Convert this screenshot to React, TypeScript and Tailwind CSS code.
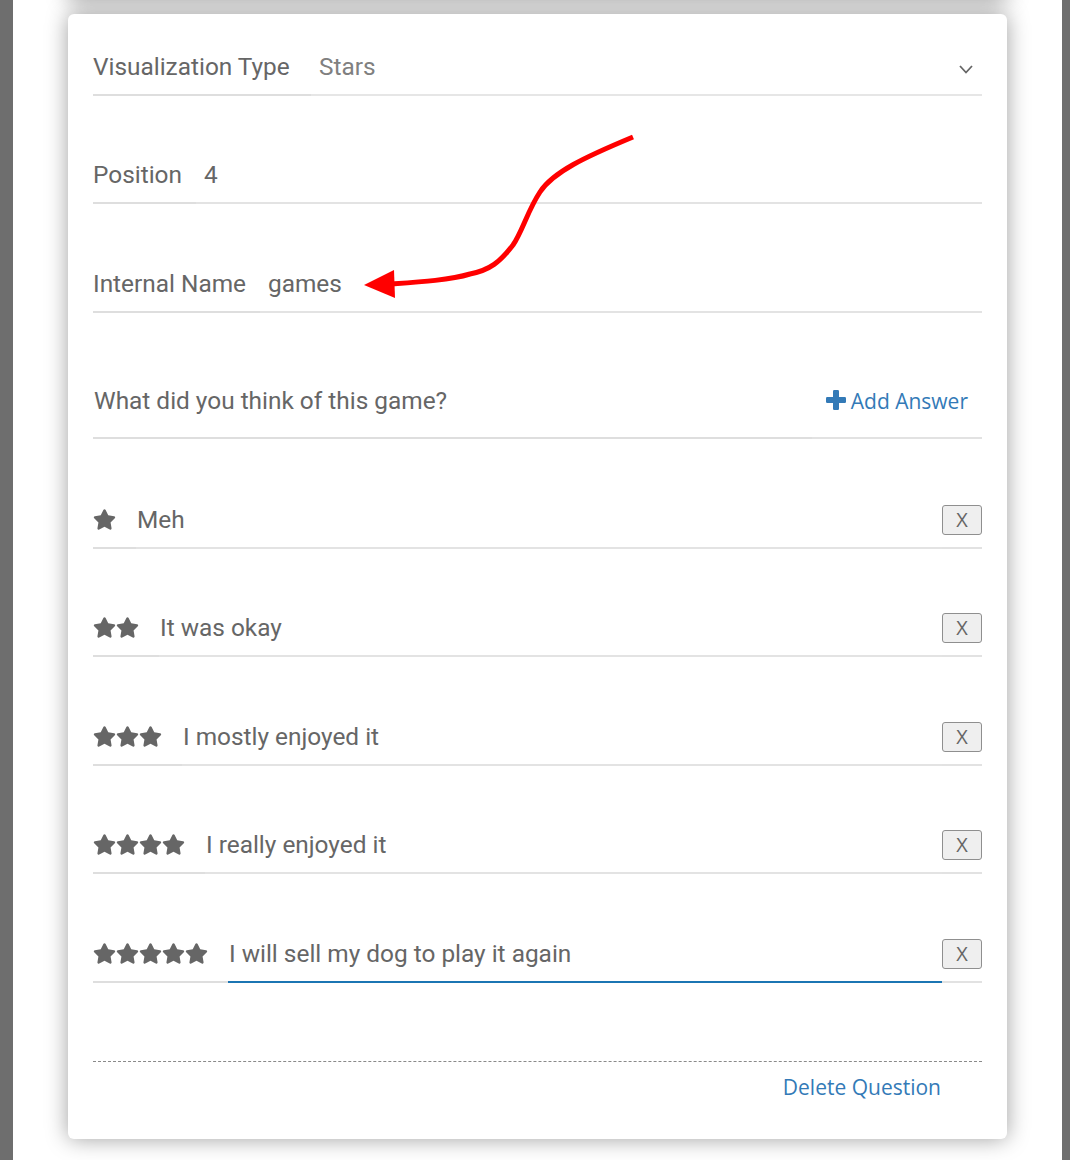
import React from "react";
import { FaStar } from "react-icons/fa";

const labelFont = { fontFamily: "Roboto, 'Liberation Sans', sans-serif" };
const openSans = { fontFamily: "'Open Sans', 'Liberation Sans', sans-serif" };

function Stars({ n }: { n: number }) {
  return (
    <div className="flex items-center text-[#666] mt-[-2px]">
      {Array.from({ length: n }).map((_, i) => (
        <FaStar key={i} size={23} />
      ))}
    </div>
  );
}

function XButton() {
  return (
    <div className="flex h-full w-[40px] items-center border-b-2 border-[#e2e2e2]">
      <button
        className="flex h-[30px] w-[40px] items-center justify-center rounded-[3px] border border-[#8f8f8f] bg-[#efefef] text-[20px] text-[#666]"
        style={openSans}
      >
        X
      </button>
    </div>
  );
}

function AnswerRow({
  n,
  text,
  focused,
  mt,
}: {
  n: number;
  text: string;
  focused?: boolean;
  mt: string;
}) {
  return (
    <div className={`flex h-[56px] items-center ${mt}`}>
      <div className="flex h-full items-center border-b-2 border-[#dedede] pr-[20px]">
        <Stars n={n} />
      </div>
      <div
        className={`flex h-full flex-1 items-center border-b-2 pl-px text-[24.4px] text-[#666] ${
          focused ? "border-[#1b75b3]" : "border-[#e3e3e3]"
        }`}
      >
        {text}
      </div>
      <XButton />
    </div>
  );
}

export default function App() {
  return (
    <div className="relative flex h-[1160px] w-[1070px] overflow-hidden bg-white" style={labelFont}>
      <div className="w-[13px] bg-[#6e6e6e]" />
      <div className="relative flex-1 px-[55px] pt-[14px]">
        <div className="mb-[14px] mt-[-34px] h-[20px] rounded-[6px] bg-white shadow-[0_0_22px_rgba(0,0,0,0.4)]" />
        <div className="rounded-[6px] bg-white px-[25px] pb-[38px] pt-[26px] shadow-[0_0_22px_rgba(0,0,0,0.38)]">
          {/* Visualization Type */}
          <div className="flex h-[56px] items-center">
            <div className="flex h-full w-[218px] items-center border-b-2 border-[#dedede] text-[24.4px] text-[#666]">
              Visualization Type
            </div>
            <div className="flex h-full flex-1 items-center justify-between border-b-2 border-[#e6e6e6] pl-[8px] pr-[9px] text-[24.4px] text-[#808080]">
              <span>Stars</span>
              <svg width="14" height="9" viewBox="0 0 14 9" className="mt-[4px]">
                <polyline points="1,1 7,7.5 13,1" fill="none" stroke="#666" strokeWidth="1.8" />
              </svg>
            </div>
          </div>

          {/* Position */}
          <div className="mt-[52px] flex h-[56px] items-center">
            <div className="flex h-full items-center border-b-2 border-[#dedede] pr-[14px] text-[24.4px] text-[#666]">
              Position
            </div>
            <div className="flex h-full flex-1 items-center border-b-2 border-[#e3e3e3] pl-[8px] text-[24.4px] text-[#666]">
              4
            </div>
          </div>

          {/* Internal Name */}
          <div className="mt-[53px] flex h-[56px] items-center">
            <div className="flex h-full items-center border-b-2 border-[#dedede] pr-[14px] text-[24.4px] text-[#666]">
              Internal Name
            </div>
            <div className="flex h-full flex-1 items-center border-b-2 border-[#e3e3e3] pl-[8px] text-[24.4px] text-[#666]">
              games
            </div>
          </div>

          {/* Question */}
          <div className="mt-[50px] flex h-[76px] items-center">
            <div className="flex h-full flex-1 items-center border-b-2 border-[#dedede] pl-px pt-[2px] text-[24.4px] text-[#666]">
              What did you think of this game?
            </div>
            <div
              className="flex h-full w-[170px] items-center justify-end border-b-2 border-[#e2e2e2] pr-[14px] pt-[3px] text-[21px] text-[#337ab7]"
              style={openSans}
            >
              <svg width="20" height="20" viewBox="0 0 20 20" className="mr-[5px] mt-[-3px]">
                <rect x="7" y="0" width="6" height="20" rx="1.2" fill="#337ab7" />
                <rect x="0" y="7" width="20" height="6" rx="1.2" fill="#337ab7" />
              </svg>
              <span>Add Answer</span>
            </div>
          </div>

          <AnswerRow n={1} text="Meh" mt="mt-[54px]" />
          <AnswerRow n={2} text="It was okay" mt="mt-[52px]" />
          <AnswerRow n={3} text="I mostly enjoyed it" mt="mt-[53px]" />
          <AnswerRow n={4} text="I really enjoyed it" mt="mt-[52px]" />
          <AnswerRow n={5} text="I will sell my dog to play it again" focused mt="mt-[53px]" />

          <div className="mt-[78px] border-t border-dashed border-[#8a8a8a]" />
          <div
            className="mt-[11px] flex justify-end pr-[41px] text-[21px] leading-[28px] text-[#337ab7]"
            style={openSans}
          >
            Delete Question
          </div>
        </div>
      </div>
      <div className="w-[8px] bg-[#6e6e6e]" />

      <svg
        className="pointer-events-none absolute left-0 top-0"
        width="1070"
        height="1160"
        viewBox="0 0 1070 1160"
      >
        <path
          d="M633,137 C585,157 553,172 540,192 C528,210 522,232 513,245 C500,262 490,270 470,274 C450,280 420,282 392,284"
          fill="none"
          stroke="#ff0000"
          strokeWidth="5"
          strokeLinecap="butt"
        />
        <polygon points="364,285 394,270 395,298" fill="#ff0000" />
      </svg>
    </div>
  );
}
